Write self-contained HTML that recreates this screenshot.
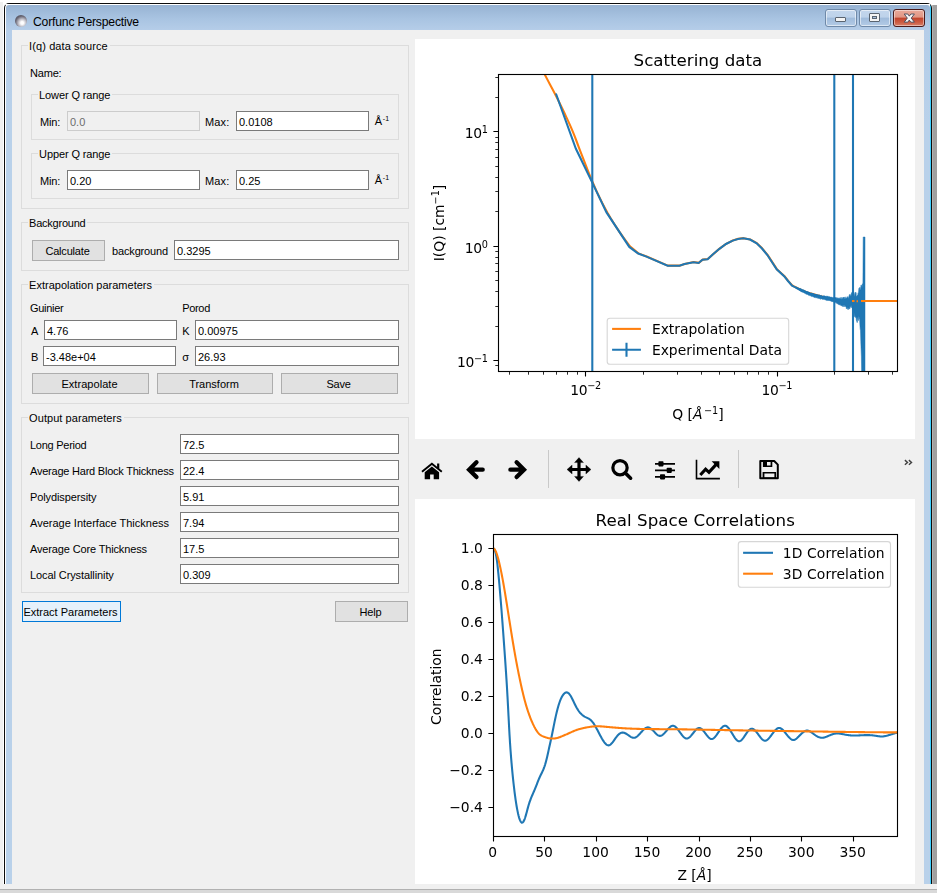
<!DOCTYPE html>
<html lang="en"><head><meta charset="utf-8"><title>Corfunc Perspective</title>
<style>

html,body{margin:0;padding:0}
body{width:937px;height:893px;position:relative;overflow:hidden;background:#fff;font:11px "Liberation Sans",sans-serif;color:#000}
div,span{position:absolute;box-sizing:border-box;white-space:nowrap}
svg{position:absolute;overflow:visible}
.t{line-height:14px;height:14px}
.gb{border:1px solid #dcdcdc}
.gl{background:#f0f0f0;padding:0 2px 0 1px;line-height:14px;height:14px}
.in{background:#fff;border:1px solid #7a7a7a;line-height:18px;padding:1px 0 0 2px;overflow:hidden}
.in.dis{background:#f0f0f0;border-color:#cccccc;color:#6d6d6d}
.btn{background:#e1e1e1;border:1px solid #adadad;text-align:center;line-height:19px;padding:1px 2px 0 0}
.pl text{font-family:"DejaVu Sans",sans-serif;fill:#000}

</style></head>
<body>

<!-- desktop around window -->
<div style="left:0;top:2px;width:3px;height:891px;background:#f0f0f0"></div>
<div style="left:932px;top:5px;width:5px;height:879px;background:#a0a0a0"></div>
<div style="left:932px;top:5px;width:1px;height:879px;background:#b4b4b4"></div>
<!-- window frame -->
<div style="left:4px;top:3px;width:928px;height:881px;background:#0c0c0c;border-radius:5px 5px 0 0"></div>
<div style="left:5px;top:4px;width:926px;height:880px;background:linear-gradient(90deg,#fff 0,#fff 925px,#3fd0ff 925px);border-radius:4px 4px 0 0"></div>
<div style="left:6px;top:5px;width:924px;height:879px;border-radius:3px 3px 0 0;background:linear-gradient(180deg,#97b3d3 0,#a9c4e2 14px,#b5cde8 25px,#b9d1ea 120px,#b9d1ea 100%)"></div>
<div style="left:5px;top:4px;width:925px;height:1px;background:#fff;border-radius:5px 0 0 0"></div>
<!-- client area -->
<div style="left:12px;top:30px;width:912px;height:854px;background:#f0f0f0"></div>
<!-- title -->
<div style="left:15px;top:14.8px;width:12px;height:12px;border-radius:50%;background:radial-gradient(circle at 60% 66%,#fff 0,#fbfbfc 14%,#b9b8c2 38%,#6b6976 62%,#4c4a57 82%,#55535f 100%)"></div>
<div style="left:33px;top:14px;font-size:12.2px;line-height:16px;letter-spacing:-0.2px;color:#000">Corfunc Perspective</div>
<!-- caption buttons -->
<div style="left:825px;top:9px;width:32px;height:18px;border:1px solid #6f89a8;border-radius:3px;background:linear-gradient(180deg,#c3d6ec 0,#bdd2ea 45%,#9fbbdb 50%,#b3cbe6 100%);box-shadow:inset 0 0 0 1px rgba(255,255,255,.55)"></div>
<div style="left:835px;top:17px;width:11px;height:5px;border:1px solid #5a6470;border-radius:1px;background:#f4f4f4"></div>
<div style="left:859px;top:9px;width:32px;height:18px;border:1px solid #6f89a8;border-radius:3px;background:linear-gradient(180deg,#c3d6ec 0,#bdd2ea 45%,#9fbbdb 50%,#b3cbe6 100%);box-shadow:inset 0 0 0 1px rgba(255,255,255,.55)"></div>
<div style="left:869px;top:13px;width:11px;height:9px;border:1px solid #5a6470;border-radius:1px;background:#f4f4f4"></div>
<div style="left:872px;top:16px;width:5px;height:3px;border:1px solid #5a6470;background:#a9c0dc"></div>
<div style="left:893px;top:9px;width:32px;height:18px;border:1px solid #4a1a1a;border-radius:3px;background:linear-gradient(180deg,#e9a99a 0,#e19684 45%,#c1432c 50%,#cb5a41 75%,#d88068 100%);box-shadow:inset 0 0 0 1px rgba(255,255,255,.45)"></div>
<svg style="left:902.6px;top:12.6px" width="12.6" height="10.2" viewBox="0 0 14 12"><path d="M1 1.2h4.2L7 3.7l1.8-2.5H13L9.3 6l3.7 4.8H8.8L7 8.3 5.2 10.8H1L4.7 6z" fill="#f8f8f8" stroke="#474b5c" stroke-width="1.1" stroke-linejoin="round"/></svg>
<!-- bottom strip -->
<div style="left:0;top:884px;width:937px;height:5px;background:#f0f0f0"></div>
<div style="left:0;top:889px;width:937px;height:1px;background:#b1b1b1"></div>
<div style="left:0;top:890px;width:937px;height:3px;background:#d9d9d9"></div>

<div class="gb" style="left:21px;top:45px;width:388px;height:164px"></div><span class="gl" style="left:28.1px;top:39px;letter-spacing:0.1px;">I(q) data source</span>
<span class="t" style="left:30px;top:66px;letter-spacing:-0.18px;">Name:</span>
<div class="gb" style="left:31px;top:94px;width:368px;height:46px"></div><span class="gl" style="left:38.1px;top:88px;letter-spacing:-0.115px;">Lower Q range</span>
<span class="t" style="left:40px;top:115px;letter-spacing:-0.12px;">Min:</span>
<div class="in dis" style="left:67px;top:111px;width:133px;height:20px">0.0</div>
<span class="t" style="left:205px;top:115px;letter-spacing:0.17px;">Max:</span>
<div class="in " style="left:236px;top:111px;width:133px;height:20px">0.0108</div>
<span class="t" style="left:374.8px;top:112px;">&#197;<span style="position:static;font-size:7px;vertical-align:4px;margin-left:.6px;letter-spacing:.2px">-1</span></span>
<div class="gb" style="left:31px;top:153px;width:368px;height:46px"></div><span class="gl" style="left:38.1px;top:147px;letter-spacing:-0.115px;">Upper Q range</span>
<span class="t" style="left:40px;top:174px;letter-spacing:-0.12px;">Min:</span>
<div class="in " style="left:67px;top:170px;width:133px;height:20px">0.20</div>
<span class="t" style="left:205px;top:174px;letter-spacing:0.17px;">Max:</span>
<div class="in " style="left:236px;top:170px;width:133px;height:20px">0.25</div>
<span class="t" style="left:374.8px;top:171px;">&#197;<span style="position:static;font-size:7px;vertical-align:4px;margin-left:.6px;letter-spacing:.2px">-1</span></span>
<div class="gb" style="left:21px;top:222px;width:388px;height:49px"></div><span class="gl" style="left:28.1px;top:216px;letter-spacing:-0.24px;">Background</span>
<div class="btn" style="left:32px;top:240px;width:73px;height:21px;letter-spacing:-0.18px;">Calculate</div>
<span class="t" style="left:112px;top:244px;letter-spacing:-0.15px;">background</span>
<div class="in " style="left:174px;top:240px;width:225px;height:20px">0.3295</div>
<div class="gb" style="left:21px;top:284px;width:388px;height:120px"></div><span class="gl" style="left:28.1px;top:278px;">Extrapolation parameters</span>
<span class="t" style="left:30px;top:301px;letter-spacing:-0.31px;">Guinier</span>
<span class="t" style="left:182.2px;top:301px;letter-spacing:-0.32px;">Porod</span>
<span class="t" style="left:31px;top:324px;">A</span>
<div class="in " style="left:44px;top:320px;width:133px;height:20px">4.76</div>
<span class="t" style="left:182.2px;top:324px;">K</span>
<div class="in " style="left:195px;top:320px;width:204px;height:20px">0.00975</div>
<span class="t" style="left:31px;top:350px;">B</span>
<div class="in " style="left:43px;top:346px;width:133px;height:20px">-3.48e+04</div>
<span class="t" style="left:182.2px;top:350px;">&#963;</span>
<div class="in " style="left:195px;top:346px;width:204px;height:20px">26.93</div>
<div class="btn" style="left:32px;top:373px;width:117px;height:21px;letter-spacing:0.05px;">Extrapolate</div>
<div class="btn" style="left:157px;top:373px;width:116px;height:21px;">Transform</div>
<div class="btn" style="left:281px;top:373px;width:117px;height:21px;letter-spacing:-0.27px;">Save</div>
<div class="gb" style="left:21px;top:417px;width:388px;height:176px"></div><span class="gl" style="left:28.1px;top:411px;letter-spacing:0.06px;">Output parameters</span>
<span class="t" style="left:30px;top:438px;letter-spacing:-0.26px;">Long Period</span>
<div class="in " style="left:180px;top:434px;width:219px;height:20px">72.5</div>
<span class="t" style="left:30px;top:464px;letter-spacing:-0.225px;">Average Hard Block Thickness</span>
<div class="in " style="left:180px;top:460px;width:219px;height:20px">22.4</div>
<span class="t" style="left:30px;top:490px;letter-spacing:-0.11px;">Polydispersity</span>
<div class="in " style="left:180px;top:486px;width:219px;height:20px">5.91</div>
<span class="t" style="left:30px;top:516px;">Average Interface Thickness</span>
<div class="in " style="left:180px;top:512px;width:219px;height:20px">7.94</div>
<span class="t" style="left:30px;top:542px;letter-spacing:-0.145px;">Average Core Thickness</span>
<div class="in " style="left:180px;top:538px;width:219px;height:20px">17.5</div>
<span class="t" style="left:30px;top:568px;letter-spacing:-0.095px;">Local Crystallinity</span>
<div class="in " style="left:180px;top:564px;width:219px;height:20px">0.309</div>
<div class="btn" style="left:22px;top:601px;width:99px;height:21px;background:#e5f1fb;border-color:#0078d7">Extract Parameters</div>
<div class="btn" style="left:335px;top:601px;width:73px;height:21px;letter-spacing:-0.2px;">Help</div>

<div style="left:415px;top:39px;width:500px;height:400px;background:#fff"></div>
<div style="left:415px;top:499px;width:500px;height:385px;background:#fff"></div>
<svg class="pl" style="left:416px;top:39px;will-change:transform" width="499" height="400" viewBox="416 39 499 400">
<defs><clipPath id="c1"><rect x="498.5" y="74.5" width="399" height="297"/></clipPath></defs>
<g clip-path="url(#c1)" fill="none" stroke-linejoin="round">
<path d="M537.58 60 L539.9 64.78 L542.26 69.56 L544.67 74.34 L547.16 79.12 L549.72 83.9 L552.28 88.68 L554.78 93.46 L557.2 98.24 L559.57 103.02 L561.9 107.79 L564.19 112.57 L566.45 117.35 L568.66 122.13 L570.79 126.91 L572.8 131.69 L574.72 136.47 L576.57 141.25 L578.38 146.03 L580.19 150.81 L582.04 155.59 L583.9 160.37 L585.74 165.15 L587.58 169.93 L589.47 174.71 L591.44 179.49 L593.51 184.27 L595.64 189.05 L597.83 193.83 L600.11 198.61 L602.49 203.38 L604.99 208.16 L607.62 212.94 L610.4 217.72 L613.33 222.5 L616.4 227.28 L619.61 232.06 L622.95 236.84 L626.41 241.62 L630 246.4 L638.35 253.35 L646.65 256.45 L667.75 265.65 L679.55 265.65 L684.65 263.95 L693.65 262.05 L698.75 262.85 L702.65 259.65 L707.75 259.05 L712.85 254.45 L719.55 248.65 L726.15 243.85 L732.85 240.45 L738.15 238.75 L743.55 238.15 L750.15 239.45 L756.85 243.15 L762.15 248.35 L767.55 254.85 L776.85 269.15 L784.55 276.25 L788.15 280.85 L792.25 285.45 L794.15 286.45 L802.15 290.35 L810.15 293.35 L826.15 297.75 L834.15 299.45 L843 301.2 L852 301 L900 301" stroke="#ff7f0e" stroke-width="2.08"/>
<path d="M592.3 72.5V373.5" stroke="#1f77b4" stroke-width="2.08"/>
<path d="M834.3 72.5V373.5" stroke="#1f77b4" stroke-width="2.08"/>
<path d="M853 72.5V373.5" stroke="#1f77b4" stroke-width="2.08"/>
<path d="M555.9 93.5 L575.9 148.8 L592.4 182.9 L606.5 212.4 L629.3 246.9 L638.2 253.5 L646.5 256.6 L667.6 265.8 L679.4 265.8 L684.5 264.1 L693.5 262.2 L698.6 263 L702.5 259.8 L707.6 259.2 L712.7 254.6 L719.4 248.8 L726 244 L732.7 240.6 L738 238.9 L743.4 238.3 L750 239.6 L756.7 243.3 L762 248.5 L767.4 255 L776.7 269.3 L784.4 276.4 L788 281 L792.1 285.6 L794 286.6 L802 290.5 L810 293.5 L826 297.9 L834 299.6" stroke="#1f77b4" stroke-width="2.08" stroke-linejoin="miter"/>
<path d="M796 287.26 L796.3 287.27 L796.6 287.51 L796.9 287.69 L797.2 287.65 L797.5 287.76 L797.8 287.61 L798.1 287.92 L798.4 288.25 L798.7 288.3 L799 288.32 L799.3 288.01 L799.6 288.6 L799.9 288.67 L800.2 288.31 L800.5 288.77 L800.8 288.47 L801.1 288.68 L801.4 288.96 L801.7 288.98 L802 289.55 L802.3 289.73 L802.6 289.52 L802.9 289.64 L803.2 289.62 L803.5 289.74 L803.8 290.34 L804.1 290.39 L804.4 290.12 L804.7 290.57 L805 290.65 L805.3 291.12 L805.6 291.16 L805.9 291.21 L806.2 291.31 L806.5 291.75 L806.8 291.91 L807.1 291.55 L807.4 291.61 L807.7 292.18 L808 291.75 L808.3 292.12 L808.6 292.02 L808.9 292.35 L809.2 292.3 L809.5 292.6 L809.8 293.13 L810.1 293.34 L810.4 293.32 L810.7 293.21 L811 293.33 L811.3 293.19 L811.6 293.11 L811.9 293.4 L812.2 293.71 L812.5 293.23 L812.8 293.26 L813.1 293.96 L813.4 293.64 L813.7 294.05 L814 294.15 L814.3 294.39 L814.6 294 L814.9 294.04 L815.2 294.5 L815.5 294.54 L815.8 294.51 L816.1 294.72 L816.4 294.64 L816.7 295 L817 294.51 L817.3 294.95 L817.6 295.21 L817.9 294.72 L818.2 295.05 L818.5 294.89 L818.8 295.05 L819.1 294.76 L819.4 294.78 L819.7 295.55 L820 295.33 L820.3 295.53 L820.6 295.69 L820.9 295.42 L821.2 295.41 L821.5 295.26 L821.8 295.92 L822.1 296 L822.4 295.95 L822.7 296.13 L823 295.95 L823.3 296.04 L823.6 295.57 L823.9 296.2 L824.2 295.79 L824.5 295.94 L824.8 295.86 L825.1 296.16 L825.4 296.3 L825.7 296.26 L826 296.02 L826.3 295.96 L826.6 296.68 L826.9 296.13 L827.2 296.32 L827.5 295.98 L827.8 296.25 L828.1 296.05 L828.4 296.38 L828.7 296.84 L829 297.18 L829.3 296.83 L829.6 296.46 L829.9 296.95 L830.2 296.97 L830.5 297.26 L830.8 296.98 L831.1 297.49 L831.4 296.97 L831.7 296.88 L832 297.21 L832.3 297.75 L832.6 297.57 L832.9 297.36 L833.2 297.43 L833.5 297.67 L833.8 297.49 L834.1 297.67 L834.4 298.22 L834.7 298.22 L835 298.15 L835.3 297.26 L835.6 297.86 L835.9 297.64 L836.2 298.44 L836.5 297.62 L836.8 298.57 L837.1 297.57 L837.4 297.88 L837.7 298.76 L838 298.23 L838.3 298.82 L838.6 298.21 L838.9 297.72 L839.2 298.59 L839.5 298.29 L839.8 298.3 L840.1 297.64 L840.4 297.62 L840.7 299.08 L841 299.12 L841.3 299.14 L841.6 297.9 L841.9 297.23 L842.2 298.25 L842.5 298.62 L842.8 298.41 L843.1 297.08 L843.4 297.45 L843.7 298.49 L844 296.97 L844.3 298.79 L844.6 299.12 L844.9 297.32 L845.2 296.8 L845.5 299.12 L845.8 298.58 L846.1 297.74 L846.4 297.79 L846.7 299.02 L847 297.4 L847.3 296.48 L847.6 298.14 L847.9 297.19 L848.2 298.11 L848.5 298.61 L848.8 296.39 L849.1 295.67 L849.4 294.69 L849.7 296.87 L850 294.06 L850.3 296.58 L850.6 295.42 L850.9 295.76 L851.2 295.21 L851.5 292.83 L851.8 292.52 L852.1 295.24 L852.4 292.47 L852.7 294.25 L853 291.51 L853.3 292.27 L853.6 294.3 L853.9 292.48 L854.2 295.43 L854.5 296.55 L854.8 293.53 L855.1 293.54 L855.4 292.05 L855.7 294.55 L856 292.54 L856.3 295.73 L856.6 296.55 L856.9 295.96 L857.2 295.68 L857.5 294.85 L857.8 295.86 L858.1 292.82 L858.4 293.99 L858.7 290.12 L859 288.04 L859.3 288.03 L859.6 290.95 L859.9 287.06 L860.2 289.81 L860.5 290.09 L860.8 287.6 L861.1 284.94 L861.4 287.41 L861.7 285.44 L862 288.28 L862.3 283.93 L862.6 283.74 L862.9 284.98 L863.2 237 L863.5 237 L863.8 237 L864.1 237 L864.4 237 L864.7 237 L865 237 L865 380 L864.7 380 L864.4 380 L864.1 380 L863.8 380 L863.5 380 L863.2 380 L862.9 380 L862.6 380 L862.3 380 L862 380 L861.7 375.33 L861.4 356.89 L861.1 349.36 L860.8 341.62 L860.5 330.78 L860.2 328.93 L859.9 325.02 L859.6 318.89 L859.3 319.07 L859 316.41 L858.7 316.99 L858.4 320.7 L858.1 316.46 L857.8 318.17 L857.5 320.27 L857.2 322.75 L856.9 321 L856.6 321.24 L856.3 319.67 L856 316.42 L855.7 317.59 L855.4 315.44 L855.1 317.26 L854.8 316.53 L854.5 316.59 L854.2 315.49 L853.9 311.34 L853.6 309.99 L853.3 309.43 L853 308.73 L852.7 306.93 L852.4 308.22 L852.1 306.36 L851.8 305.05 L851.5 307.69 L851.2 306.44 L850.9 305.42 L850.6 306.64 L850.3 305.71 L850 308.4 L849.7 306.12 L849.4 309.1 L849.1 306.67 L848.8 308.52 L848.5 307.92 L848.2 309.82 L847.9 309.46 L847.6 308.82 L847.3 308.47 L847 307 L846.7 308.35 L846.4 308.96 L846.1 306.91 L845.8 306.22 L845.5 306.65 L845.2 305.63 L844.9 306.24 L844.6 306.8 L844.3 305.16 L844 305.12 L843.7 305.66 L843.4 306.82 L843.1 304.87 L842.8 305.69 L842.5 306.5 L842.2 304.75 L841.9 306.17 L841.6 305.21 L841.3 305.44 L841 305.24 L840.7 304.55 L840.4 305.59 L840.1 304.73 L839.8 305.05 L839.5 305.02 L839.2 304.44 L838.9 304.6 L838.6 304.56 L838.3 304.59 L838 303.56 L837.7 303.18 L837.4 304.1 L837.1 303.2 L836.8 303.5 L836.5 302.88 L836.2 302.39 L835.9 303.2 L835.6 301.98 L835.3 302.19 L835 301.71 L834.7 301.6 L834.4 302.27 L834.1 302.07 L833.8 301.21 L833.5 302.16 L833.2 301.11 L832.9 302.01 L832.6 301.54 L832.3 301.4 L832 301.24 L831.7 301.79 L831.4 301.55 L831.1 300.9 L830.8 301.13 L830.5 300.73 L830.2 300.96 L829.9 300.65 L829.6 300.28 L829.3 300.72 L829 300.79 L828.7 300.11 L828.4 300.75 L828.1 300.06 L827.8 300.29 L827.5 300.82 L827.2 300.37 L826.9 300.49 L826.6 300.53 L826.3 300.3 L826 299.7 L825.7 299.84 L825.4 300.02 L825.1 300.06 L824.8 299.45 L824.5 299.59 L824.2 299.49 L823.9 299.29 L823.6 299.12 L823.3 299.48 L823 299.87 L822.7 299.21 L822.4 299.04 L822.1 299.24 L821.8 298.98 L821.5 298.8 L821.2 299.04 L820.9 298.67 L820.6 299.34 L820.3 299.23 L820 298.3 L819.7 298.26 L819.4 298.76 L819.1 298.86 L818.8 298.19 L818.5 298.38 L818.2 298.24 L817.9 297.85 L817.6 297.87 L817.3 298.33 L817 298.22 L816.7 297.73 L816.4 298.01 L816.1 297.44 L815.8 297.73 L815.5 297.6 L815.2 297.19 L814.9 297.65 L814.6 297.5 L814.3 297.38 L814 296.83 L813.7 296.76 L813.4 297.14 L813.1 297.1 L812.8 296.31 L812.5 296.48 L812.2 296.55 L811.9 296.71 L811.6 296.51 L811.3 296.34 L811 295.84 L810.7 295.8 L810.4 295.79 L810.1 296.06 L809.8 295.96 L809.5 295.17 L809.2 295.11 L808.9 295.41 L808.6 295.22 L808.3 294.97 L808 294.79 L807.7 294.49 L807.4 294.85 L807.1 294.26 L806.8 294.23 L806.5 294.23 L806.2 294.25 L805.9 293.54 L805.6 293.68 L805.3 293.69 L805 293.62 L804.7 292.98 L804.4 293.23 L804.1 292.94 L803.8 292.59 L803.5 292.65 L803.2 292.33 L802.9 292.71 L802.6 292.18 L802.3 291.83 L802 292.05 L801.7 291.88 L801.4 291.74 L801.1 291.64 L800.8 291.23 L800.5 291.31 L800.2 291.22 L799.9 290.93 L799.6 290.64 L799.3 290.45 L799 290.44 L798.7 289.88 L798.4 289.98 L798.1 289.63 L797.8 289.36 L797.5 289.21 L797.2 289 L796.9 289.1 L796.6 289 L796.3 288.65 L796 288.47Z" fill="#1f77b4" stroke="#1f77b4" stroke-width="0.5" stroke-linejoin="round"/>
<path d="M852 301H854.5M856.5 301.3H858M861 301H900" stroke="#ff7f0e" stroke-width="2.08"/>
</g>
<rect x="498.5" y="74.5" width="399" height="297" fill="none" stroke="#000" stroke-width="1.11"/>
<path d="M585.5 371.5v5.1M777.5 371.5v5.1M498.5 360.5h-5.1M498.5 246.5h-5.1M498.5 131.5h-5.1" stroke="#000" stroke-width="1.11"/>
<path d="M509.5 371.5v3.2M528.5 371.5v3.2M543.5 371.5v3.2M556.5 371.5v3.2M567.5 371.5v3.2M577.5 371.5v3.2M643.5 371.5v3.2M677.5 371.5v3.2M701.5 371.5v3.2M719.5 371.5v3.2M734.5 371.5v3.2M747.5 371.5v3.2M758.5 371.5v3.2M768.5 371.5v3.2M834.5 371.5v3.2M868.5 371.5v3.2M892.5 371.5v3.2M498.5 365.5h-3.2M498.5 326.5h-3.2M498.5 306.5h-3.2M498.5 291.5h-3.2M498.5 280.5h-3.2M498.5 271.5h-3.2M498.5 263.5h-3.2M498.5 257.5h-3.2M498.5 251.5h-3.2M498.5 211.5h-3.2M498.5 191.5h-3.2M498.5 177.5h-3.2M498.5 166.5h-3.2M498.5 157.5h-3.2M498.5 149.5h-3.2M498.5 142.5h-3.2M498.5 137.5h-3.2M498.5 97.5h-3.2M498.5 77.5h-3.2" stroke="#000" stroke-width="0.83"/>
<text x="585.59" y="394.6" font-size="13.89" text-anchor="middle" letter-spacing="-0.35">10<tspan dy="-5.3" font-size="9.72">&#8722;2</tspan></text>
<text x="776.78" y="394.6" font-size="13.89" text-anchor="middle" letter-spacing="-0.35">10<tspan dy="-5.3" font-size="9.72">&#8722;1</tspan></text>
<text x="487.6" y="366.9" font-size="13.89" text-anchor="end" letter-spacing="-0.35">10<tspan dy="-5.3" font-size="9.72">&#8722;1</tspan></text>
<text x="487.6" y="252.9" font-size="13.89" text-anchor="end" letter-spacing="-0.35">10<tspan dy="-5.3" font-size="9.72">0</tspan></text>
<text x="487.6" y="137.9" font-size="13.89" text-anchor="end" letter-spacing="-0.35">10<tspan dy="-5.3" font-size="9.72">1</tspan></text>
<text x="697.9" y="65.9" font-size="16.67" text-anchor="middle">Scattering data</text>
<text x="697.9" y="418.8" font-size="13.89" text-anchor="middle">Q [<tspan font-style="italic">&#197;</tspan><tspan dy="-5.3" dx="1.5" font-size="9.72">&#8722;1</tspan><tspan dy="5.3">]</tspan></text>
<text transform="translate(444.3 223) rotate(-90)" font-size="13.89" text-anchor="middle">I(Q) [cm<tspan dy="-5.3" font-size="9.72">&#8722;1</tspan><tspan dy="5.3">]</tspan></text>
<rect x="607.2" y="318.3" width="181.5" height="46" rx="2.8" fill="#fff" fill-opacity="0.8" stroke="#ccc" stroke-opacity="0.8" stroke-width="1.11"/>
<path d="M612.1 328.9h28.8" stroke="#ff7f0e" stroke-width="2.08"/>
<path d="M612.1 349.7h28.8M626.5 342.8v13.9" stroke="#1f77b4" stroke-width="2.08"/>
<text x="651.9" y="333.8" font-size="13.89">Extrapolation</text>
<text x="651.9" y="354.6" font-size="13.89">Experimental Data</text>
</svg>
<svg class="pl" style="left:416px;top:499px;will-change:transform" width="499" height="385" viewBox="416 499 499 385">
<defs><clipPath id="c2"><rect x="493.5" y="534.5" width="404" height="302"/></clipPath></defs>
<g clip-path="url(#c2)" fill="none" stroke-linejoin="round">
<path d="M493.3 548.5 L493.81 548.67 L494.31 549.23 L494.82 550.24 L495.33 551.76 L495.84 553.85 L496.34 556.57 L496.85 559.96 L497.36 563.97 L497.86 568.52 L498.37 573.52 L498.88 578.88 L499.39 584.53 L499.89 590.39 L500.4 596.42 L500.91 602.63 L501.42 609 L501.92 615.51 L502.43 622.17 L502.94 628.97 L503.44 635.88 L503.95 642.9 L504.46 650 L504.97 657.18 L505.47 664.43 L505.98 671.84 L506.49 679.57 L506.99 687.78 L507.5 696.64 L508.01 706.18 L508.52 716.05 L509.02 725.79 L509.53 734.92 L510.04 743.13 L510.55 750.5 L511.05 757.15 L511.56 763.21 L512.07 768.82 L512.57 774.08 L513.08 779.06 L513.59 783.75 L514.1 788.16 L514.6 792.3 L515.11 796.17 L515.62 799.78 L516.12 803.13 L516.63 806.22 L517.14 809.06 L517.65 811.65 L518.15 813.99 L518.66 816.06 L519.17 817.86 L519.68 819.38 L520.18 820.62 L520.69 821.57 L521.2 822.24 L521.7 822.6 L522.21 822.66 L522.72 822.42 L523.23 821.89 L523.73 821.1 L524.24 820.05 L524.75 818.76 L525.25 817.26 L525.76 815.59 L526.27 813.79 L526.78 811.91 L527.28 810 L527.79 808.11 L528.3 806.28 L528.81 804.55 L529.31 802.95 L529.82 801.44 L530.33 800.03 L530.83 798.7 L531.34 797.42 L531.85 796.2 L532.36 795.02 L532.86 793.85 L533.37 792.7 L533.88 791.54 L534.38 790.37 L534.89 789.16 L535.4 787.91 L535.91 786.63 L536.41 785.32 L536.92 784.01 L537.43 782.69 L537.94 781.39 L538.44 780.13 L538.95 778.9 L539.46 777.73 L539.96 776.62 L540.47 775.55 L540.98 774.51 L541.49 773.47 L541.99 772.43 L542.5 771.35 L543.01 770.23 L543.51 769.04 L544.02 767.75 L544.53 766.35 L545.04 764.82 L545.54 763.13 L546.05 761.28 L546.56 759.27 L547.07 757.15 L547.57 754.94 L548.08 752.68 L548.59 750.38 L549.09 748.09 L549.6 745.8 L550.11 743.5 L550.62 741.17 L551.12 738.82 L551.63 736.43 L552.14 733.99 L552.64 731.5 L553.15 728.97 L553.66 726.42 L554.17 723.89 L554.67 721.39 L555.18 718.95 L555.69 716.6 L556.2 714.36 L556.7 712.22 L557.21 710.2 L557.72 708.29 L558.22 706.49 L558.73 704.8 L559.24 703.23 L559.75 701.77 L560.25 700.42 L560.76 699.19 L561.27 698.07 L561.77 697.05 L562.28 696.13 L562.79 695.32 L563.3 694.61 L563.8 693.99 L564.31 693.47 L564.82 693.04 L565.33 692.72 L565.83 692.51 L566.34 692.41 L566.85 692.41 L567.35 692.54 L567.86 692.78 L568.37 693.12 L568.88 693.57 L569.38 694.12 L569.89 694.77 L570.4 695.5 L570.9 696.32 L571.41 697.22 L571.92 698.18 L572.43 699.18 L572.93 700.23 L573.44 701.29 L573.95 702.37 L574.46 703.44 L574.96 704.49 L575.47 705.52 L575.98 706.5 L576.48 707.44 L576.99 708.33 L577.5 709.18 L578.01 709.98 L578.51 710.74 L579.02 711.45 L579.53 712.12 L580.03 712.74 L580.54 713.32 L581.05 713.85 L581.56 714.34 L582.06 714.79 L582.57 715.2 L583.08 715.58 L583.59 715.93 L584.09 716.25 L584.6 716.55 L585.11 716.83 L585.61 717.09 L586.12 717.34 L586.63 717.58 L587.14 717.82 L587.64 718.07 L588.15 718.32 L588.66 718.6 L589.16 718.91 L589.67 719.25 L590.18 719.63 L590.69 720.06 L591.19 720.54 L591.7 721.07 L592.21 721.65 L592.72 722.28 L593.22 722.96 L593.73 723.69 L594.24 724.46 L594.74 725.28 L595.25 726.13 L595.76 727.03 L596.27 727.95 L596.77 728.89 L597.28 729.85 L597.79 730.82 L598.29 731.8 L598.8 732.78 L599.31 733.75 L599.82 734.72 L600.32 735.68 L600.83 736.62 L601.34 737.53 L601.84 738.43 L602.35 739.29 L602.86 740.12 L603.37 740.91 L603.87 741.66 L604.38 742.36 L604.89 743 L605.4 743.58 L605.9 744.09 L606.41 744.52 L606.92 744.87 L607.42 745.13 L607.93 745.29 L608.44 745.35 L608.95 745.3 L609.45 745.14 L609.96 744.88 L610.47 744.53 L610.97 744.1 L611.48 743.6 L611.99 743.04 L612.5 742.43 L613 741.77 L613.51 741.09 L614.02 740.38 L614.53 739.66 L615.03 738.93 L615.54 738.21 L616.05 737.5 L616.55 736.82 L617.06 736.17 L617.57 735.57 L618.08 735.01 L618.58 734.51 L619.09 734.07 L619.6 733.68 L620.1 733.35 L620.61 733.07 L621.12 732.86 L621.63 732.7 L622.13 732.61 L622.64 732.58 L623.15 732.6 L623.66 732.68 L624.16 732.82 L624.67 733 L625.18 733.22 L625.68 733.47 L626.19 733.76 L626.7 734.07 L627.21 734.4 L627.71 734.75 L628.22 735.1 L628.73 735.46 L629.23 735.81 L629.74 736.16 L630.25 736.49 L630.76 736.8 L631.26 737.07 L631.77 737.32 L632.28 737.52 L632.79 737.67 L633.29 737.77 L633.8 737.8 L634.31 737.77 L634.81 737.67 L635.32 737.49 L635.83 737.25 L636.34 736.95 L636.84 736.6 L637.35 736.2 L637.86 735.76 L638.36 735.28 L638.87 734.77 L639.38 734.24 L639.89 733.69 L640.39 733.13 L640.9 732.56 L641.41 731.99 L641.92 731.43 L642.42 730.88 L642.93 730.34 L643.44 729.84 L643.94 729.36 L644.45 728.92 L644.96 728.52 L645.47 728.18 L645.97 727.88 L646.48 727.65 L646.99 727.49 L647.49 727.4 L648 727.39 L648.51 727.46 L649.02 727.6 L649.52 727.8 L650.03 728.07 L650.54 728.38 L651.05 728.75 L651.55 729.16 L652.06 729.6 L652.57 730.07 L653.07 730.57 L653.58 731.09 L654.09 731.62 L654.6 732.16 L655.1 732.69 L655.61 733.22 L656.12 733.72 L656.62 734.19 L657.13 734.62 L657.64 735.01 L658.15 735.33 L658.65 735.6 L659.16 735.78 L659.67 735.89 L660.18 735.9 L660.68 735.83 L661.19 735.67 L661.7 735.44 L662.2 735.13 L662.71 734.77 L663.22 734.35 L663.73 733.89 L664.23 733.38 L664.74 732.84 L665.25 732.28 L665.75 731.69 L666.26 731.09 L666.77 730.49 L667.28 729.9 L667.78 729.31 L668.29 728.74 L668.8 728.2 L669.31 727.69 L669.81 727.22 L670.32 726.8 L670.83 726.44 L671.33 726.14 L671.84 725.92 L672.35 725.77 L672.86 725.72 L673.36 725.75 L673.87 725.89 L674.38 726.11 L674.88 726.42 L675.39 726.8 L675.9 727.25 L676.41 727.75 L676.91 728.31 L677.42 728.92 L677.93 729.55 L678.44 730.22 L678.94 730.91 L679.45 731.61 L679.96 732.32 L680.46 733.02 L680.97 733.72 L681.48 734.4 L681.99 735.05 L682.49 735.67 L683 736.24 L683.51 736.77 L684.01 737.25 L684.52 737.65 L685.03 737.99 L685.54 738.25 L686.04 738.42 L686.55 738.5 L687.06 738.48 L687.57 738.37 L688.07 738.17 L688.58 737.89 L689.09 737.54 L689.59 737.13 L690.1 736.67 L690.61 736.16 L691.12 735.6 L691.62 735.01 L692.13 734.4 L692.64 733.77 L693.14 733.12 L693.65 732.48 L694.16 731.84 L694.67 731.21 L695.17 730.62 L695.68 730.06 L696.19 729.54 L696.7 729.08 L697.2 728.69 L697.71 728.37 L698.22 728.13 L698.72 727.99 L699.23 727.95 L699.74 728.01 L700.25 728.17 L700.75 728.42 L701.26 728.75 L701.77 729.16 L702.27 729.62 L702.78 730.15 L703.29 730.71 L703.8 731.32 L704.3 731.96 L704.81 732.62 L705.32 733.3 L705.82 733.98 L706.33 734.66 L706.84 735.32 L707.35 735.96 L707.85 736.56 L708.36 737.12 L708.87 737.63 L709.38 738.08 L709.88 738.45 L710.39 738.74 L710.9 738.94 L711.4 739.04 L711.91 739.03 L712.42 738.91 L712.93 738.69 L713.43 738.38 L713.94 737.98 L714.45 737.51 L714.95 736.98 L715.46 736.38 L715.97 735.74 L716.48 735.06 L716.98 734.35 L717.49 733.61 L718 732.86 L718.51 732.11 L719.01 731.35 L719.52 730.61 L720.03 729.89 L720.53 729.19 L721.04 728.54 L721.55 727.93 L722.06 727.38 L722.56 726.89 L723.07 726.48 L723.58 726.15 L724.08 725.9 L724.59 725.76 L725.1 725.73 L725.61 725.81 L726.11 726 L726.62 726.28 L727.13 726.65 L727.64 727.1 L728.14 727.63 L728.65 728.22 L729.16 728.87 L729.66 729.58 L730.17 730.32 L730.68 731.1 L731.19 731.91 L731.69 732.73 L732.2 733.57 L732.71 734.41 L733.21 735.24 L733.72 736.06 L734.23 736.85 L734.74 737.61 L735.24 738.32 L735.75 738.98 L736.26 739.57 L736.77 740.09 L737.27 740.53 L737.78 740.87 L738.29 741.12 L738.79 741.25 L739.3 741.26 L739.81 741.15 L740.32 740.92 L740.82 740.6 L741.33 740.18 L741.84 739.68 L742.34 739.11 L742.85 738.48 L743.36 737.81 L743.87 737.1 L744.37 736.36 L744.88 735.61 L745.39 734.86 L745.9 734.11 L746.4 733.38 L746.91 732.67 L747.42 731.99 L747.92 731.35 L748.43 730.76 L748.94 730.23 L749.45 729.76 L749.95 729.37 L750.46 729.05 L750.97 728.83 L751.47 728.7 L751.98 728.68 L752.49 728.77 L753 728.94 L753.5 729.2 L754.01 729.55 L754.52 729.96 L755.03 730.43 L755.53 730.96 L756.04 731.54 L756.55 732.15 L757.05 732.8 L757.56 733.46 L758.07 734.15 L758.58 734.84 L759.08 735.53 L759.59 736.21 L760.1 736.87 L760.6 737.51 L761.11 738.12 L761.62 738.68 L762.13 739.19 L762.63 739.64 L763.14 740.02 L763.65 740.33 L764.16 740.55 L764.66 740.69 L765.17 740.71 L765.68 740.64 L766.18 740.47 L766.69 740.22 L767.2 739.89 L767.71 739.48 L768.21 739.01 L768.72 738.49 L769.23 737.92 L769.73 737.31 L770.24 736.67 L770.75 736 L771.26 735.32 L771.76 734.63 L772.27 733.94 L772.78 733.26 L773.29 732.59 L773.79 731.94 L774.3 731.31 L774.81 730.72 L775.31 730.17 L775.82 729.67 L776.33 729.21 L776.84 728.82 L777.34 728.49 L777.85 728.23 L778.36 728.06 L778.86 727.96 L779.37 727.96 L779.88 728.04 L780.39 728.21 L780.89 728.46 L781.4 728.77 L781.91 729.15 L782.42 729.58 L782.92 730.06 L783.43 730.59 L783.94 731.15 L784.44 731.74 L784.95 732.35 L785.46 732.98 L785.97 733.62 L786.47 734.27 L786.98 734.91 L787.49 735.54 L787.99 736.15 L788.5 736.74 L789.01 737.31 L789.52 737.83 L790.02 738.31 L790.53 738.75 L791.04 739.13 L791.55 739.45 L792.05 739.7 L792.56 739.87 L793.07 739.96 L793.57 739.97 L794.08 739.89 L794.59 739.73 L795.1 739.51 L795.6 739.22 L796.11 738.87 L796.62 738.48 L797.12 738.04 L797.63 737.57 L798.14 737.08 L798.65 736.57 L799.15 736.04 L799.66 735.52 L800.17 734.99 L800.68 734.48 L801.18 733.98 L801.69 733.5 L802.2 733.03 L802.7 732.6 L803.21 732.19 L803.72 731.82 L804.23 731.49 L804.73 731.2 L805.24 730.96 L805.75 730.77 L806.25 730.63 L806.76 730.55 L807.27 730.54 L807.78 730.59 L808.28 730.7 L808.79 730.87 L809.3 731.07 L809.8 731.32 L810.31 731.61 L810.82 731.93 L811.33 732.27 L811.83 732.63 L812.34 733 L812.85 733.39 L813.36 733.77 L813.86 734.16 L814.37 734.53 L814.88 734.9 L815.38 735.24 L815.89 735.58 L816.4 735.89 L816.91 736.19 L817.41 736.46 L817.92 736.72 L818.43 736.95 L818.93 737.15 L819.44 737.33 L819.95 737.48 L820.46 737.6 L820.96 737.68 L821.47 737.74 L821.98 737.76 L822.49 737.74 L822.99 737.69 L823.5 737.61 L824.01 737.51 L824.51 737.38 L825.02 737.23 L825.53 737.06 L826.04 736.88 L826.54 736.68 L827.05 736.47 L827.56 736.26 L828.06 736.04 L828.57 735.81 L829.08 735.59 L829.59 735.38 L830.09 735.17 L830.6 734.96 L831.11 734.77 L831.62 734.59 L832.12 734.41 L832.63 734.25 L833.14 734.1 L833.64 733.96 L834.15 733.84 L834.66 733.74 L835.17 733.65 L835.67 733.57 L836.18 733.52 L836.69 733.49 L837.19 733.47 L837.7 733.47 L838.21 733.49 L838.72 733.52 L839.22 733.57 L839.73 733.63 L840.24 733.7 L840.75 733.77 L841.25 733.86 L841.76 733.95 L842.27 734.05 L842.77 734.15 L843.28 734.25 L843.79 734.35 L844.3 734.46 L844.8 734.56 L845.31 734.65 L845.82 734.75 L846.32 734.83 L846.83 734.92 L847.34 735 L847.85 735.07 L848.35 735.14 L848.86 735.2 L849.37 735.26 L849.88 735.32 L850.38 735.36 L850.89 735.41 L851.4 735.44 L851.9 735.48 L852.41 735.5 L852.92 735.52 L853.43 735.54 L853.93 735.55 L854.44 735.55 L854.95 735.55 L855.45 735.54 L855.96 735.53 L856.47 735.52 L856.98 735.5 L857.48 735.48 L857.99 735.46 L858.5 735.43 L859.01 735.41 L859.51 735.38 L860.02 735.35 L860.53 735.32 L861.03 735.29 L861.54 735.27 L862.05 735.24 L862.56 735.21 L863.06 735.19 L863.57 735.17 L864.08 735.15 L864.58 735.13 L865.09 735.12 L865.6 735.11 L866.11 735.1 L866.61 735.1 L867.12 735.1 L867.63 735.1 L868.14 735.11 L868.64 735.12 L869.15 735.14 L869.66 735.16 L870.16 735.18 L870.67 735.21 L871.18 735.25 L871.69 735.29 L872.19 735.34 L872.7 735.39 L873.21 735.45 L873.71 735.51 L874.22 735.58 L874.73 735.66 L875.24 735.74 L875.74 735.82 L876.25 735.9 L876.76 735.99 L877.27 736.07 L877.77 736.14 L878.28 736.22 L878.79 736.28 L879.29 736.34 L879.8 736.39 L880.31 736.43 L880.82 736.46 L881.32 736.47 L881.83 736.47 L882.34 736.45 L882.84 736.42 L883.35 736.37 L883.86 736.3 L884.37 736.22 L884.87 736.13 L885.38 736.03 L885.89 735.92 L886.4 735.8 L886.9 735.67 L887.41 735.54 L887.92 735.39 L888.42 735.25 L888.93 735.1 L889.44 734.94 L889.95 734.78 L890.45 734.63 L890.96 734.47 L891.47 734.31 L891.97 734.15 L892.48 734 L892.99 733.84 L893.5 733.69 L894 733.54 L894.51 733.4 L895.02 733.26 L895.53 733.12 L896.03 732.99 L896.54 732.87 L897.05 732.76 L897.55 732.65 L898.06 732.55 L898.57 732.45" stroke="#1f77b4" stroke-width="2.08"/>
<path d="M493.3 548.5 L493.81 548.63 L494.31 549.01 L494.82 549.62 L495.33 550.46 L495.84 551.5 L496.34 552.74 L496.85 554.16 L497.36 555.74 L497.86 557.46 L498.37 559.33 L498.88 561.32 L499.39 563.42 L499.89 565.63 L500.4 567.95 L500.91 570.37 L501.42 572.88 L501.92 575.48 L502.43 578.17 L502.94 580.93 L503.44 583.77 L503.95 586.68 L504.46 589.65 L504.97 592.67 L505.47 595.75 L505.98 598.86 L506.49 602.01 L506.99 605.19 L507.5 608.39 L508.01 611.61 L508.52 614.83 L509.02 618.06 L509.53 621.28 L510.04 624.49 L510.55 627.68 L511.05 630.85 L511.56 634 L512.07 637.13 L512.57 640.22 L513.08 643.27 L513.59 646.28 L514.1 649.25 L514.6 652.16 L515.11 655.03 L515.62 657.84 L516.12 660.6 L516.63 663.3 L517.14 665.97 L517.65 668.58 L518.15 671.15 L518.66 673.67 L519.17 676.15 L519.68 678.59 L520.18 680.99 L520.69 683.35 L521.2 685.66 L521.7 687.93 L522.21 690.15 L522.72 692.32 L523.23 694.44 L523.73 696.49 L524.24 698.49 L524.75 700.43 L525.25 702.3 L525.76 704.1 L526.27 705.84 L526.78 707.52 L527.28 709.14 L527.79 710.7 L528.3 712.21 L528.81 713.67 L529.31 715.08 L529.82 716.44 L530.33 717.77 L530.83 719.05 L531.34 720.3 L531.85 721.5 L532.36 722.66 L532.86 723.79 L533.37 724.86 L533.88 725.9 L534.38 726.89 L534.89 727.84 L535.4 728.75 L535.91 729.61 L536.41 730.42 L536.92 731.18 L537.43 731.89 L537.94 732.55 L538.44 733.15 L538.95 733.69 L539.46 734.17 L539.96 734.6 L540.47 734.99 L540.98 735.33 L541.49 735.63 L541.99 735.9 L542.5 736.14 L543.01 736.36 L543.51 736.57 L544.02 736.76 L544.53 736.94 L545.04 737.13 L545.54 737.3 L546.05 737.47 L546.56 737.63 L547.07 737.78 L547.57 737.92 L548.08 738.05 L548.59 738.16 L549.09 738.26 L549.6 738.35 L550.11 738.42 L550.62 738.48 L551.12 738.52 L551.63 738.55 L552.14 738.56 L552.64 738.56 L553.15 738.55 L553.66 738.52 L554.17 738.48 L554.67 738.43 L555.18 738.36 L555.69 738.28 L556.2 738.19 L556.7 738.09 L557.21 737.97 L557.72 737.84 L558.22 737.69 L558.73 737.53 L559.24 737.36 L559.75 737.18 L560.25 736.98 L560.76 736.78 L561.27 736.57 L561.77 736.36 L562.28 736.14 L562.79 735.92 L563.3 735.7 L563.8 735.48 L564.31 735.26 L564.82 735.04 L565.33 734.83 L565.83 734.61 L566.34 734.39 L566.85 734.18 L567.35 733.96 L567.86 733.73 L568.37 733.51 L568.88 733.28 L569.38 733.05 L569.89 732.82 L570.4 732.59 L570.9 732.36 L571.41 732.13 L571.92 731.9 L572.43 731.67 L572.93 731.45 L573.44 731.23 L573.95 731.01 L574.46 730.8 L574.96 730.6 L575.47 730.4 L575.98 730.21 L576.48 730.02 L576.99 729.85 L577.5 729.68 L578.01 729.51 L578.51 729.35 L579.02 729.2 L579.53 729.05 L580.03 728.91 L580.54 728.78 L581.05 728.65 L581.56 728.52 L582.06 728.4 L582.57 728.28 L583.08 728.16 L583.59 728.05 L584.09 727.94 L584.6 727.83 L585.11 727.73 L585.61 727.63 L586.12 727.53 L586.63 727.44 L587.14 727.34 L587.64 727.25 L588.15 727.16 L588.66 727.08 L589.16 726.99 L589.67 726.91 L590.18 726.84 L590.69 726.76 L591.19 726.7 L591.7 726.63 L592.21 726.57 L592.72 726.52 L593.22 726.47 L593.73 726.42 L594.24 726.38 L594.74 726.35 L595.25 726.32 L595.76 726.3 L596.27 726.28 L596.77 726.27 L597.28 726.27 L597.79 726.27 L598.29 726.27 L598.8 726.29 L599.31 726.3 L599.82 726.32 L600.32 726.35 L600.83 726.37 L601.34 726.41 L601.84 726.44 L602.35 726.48 L602.86 726.52 L603.37 726.56 L603.87 726.6 L604.38 726.65 L604.89 726.69 L605.4 726.74 L605.9 726.79 L606.41 726.84 L606.92 726.88 L607.42 726.93 L607.93 726.98 L608.44 727.03 L608.95 727.07 L609.45 727.12 L609.96 727.17 L610.47 727.21 L610.97 727.26 L611.48 727.31 L611.99 727.35 L612.5 727.4 L613 727.44 L613.51 727.48 L614.02 727.53 L614.53 727.57 L615.03 727.61 L615.54 727.66 L616.05 727.7 L616.55 727.74 L617.06 727.78 L617.57 727.82 L618.08 727.86 L618.58 727.9 L619.09 727.94 L619.6 727.97 L620.1 728.01 L620.61 728.05 L621.12 728.08 L621.63 728.12 L622.13 728.15 L622.64 728.19 L623.15 728.22 L623.66 728.25 L624.16 728.28 L624.67 728.31 L625.18 728.34 L625.68 728.37 L626.19 728.4 L626.7 728.42 L627.21 728.45 L627.71 728.48 L628.22 728.5 L628.73 728.53 L629.23 728.55 L629.74 728.57 L630.25 728.6 L630.76 728.62 L631.26 728.64 L631.77 728.66 L632.28 728.68 L632.79 728.7 L633.29 728.72 L633.8 728.74 L634.31 728.75 L634.81 728.77 L635.32 728.79 L635.83 728.8 L636.34 728.82 L636.84 728.84 L637.35 728.85 L637.86 728.87 L638.36 728.88 L638.87 728.89 L639.38 728.91 L639.89 728.92 L640.39 728.93 L640.9 728.94 L641.41 728.95 L641.92 728.96 L642.42 728.97 L642.93 728.98 L643.44 728.99 L643.94 729 L644.45 729.01 L644.96 729.02 L645.47 729.03 L645.97 729.04 L646.48 729.04 L646.99 729.05 L647.49 729.06 L648 729.07 L648.51 729.07 L649.02 729.08 L649.52 729.08 L650.03 729.09 L650.54 729.1 L651.05 729.1 L651.55 729.11 L652.06 729.11 L652.57 729.12 L653.07 729.12 L653.58 729.12 L654.09 729.13 L654.6 729.13 L655.1 729.14 L655.61 729.14 L656.12 729.14 L656.62 729.15 L657.13 729.15 L657.64 729.15 L658.15 729.16 L658.65 729.16 L659.16 729.16 L659.67 729.17 L660.18 729.17 L660.68 729.17 L661.19 729.17 L661.7 729.18 L662.2 729.18 L662.71 729.18 L663.22 729.18 L663.73 729.19 L664.23 729.19 L664.74 729.19 L665.25 729.19 L665.75 729.2 L666.26 729.2 L666.77 729.2 L667.28 729.2 L667.78 729.21 L668.29 729.21 L668.8 729.21 L669.31 729.22 L669.81 729.22 L670.32 729.22 L670.83 729.23 L671.33 729.23 L671.84 729.23 L672.35 729.24 L672.86 729.24 L673.36 729.25 L673.87 729.25 L674.38 729.25 L674.88 729.26 L675.39 729.26 L675.9 729.27 L676.41 729.27 L676.91 729.28 L677.42 729.28 L677.93 729.29 L678.44 729.3 L678.94 729.3 L679.45 729.31 L679.96 729.31 L680.46 729.32 L680.97 729.33 L681.48 729.33 L681.99 729.34 L682.49 729.35 L683 729.35 L683.51 729.36 L684.01 729.37 L684.52 729.38 L685.03 729.38 L685.54 729.39 L686.04 729.4 L686.55 729.41 L687.06 729.41 L687.57 729.42 L688.07 729.43 L688.58 729.44 L689.09 729.44 L689.59 729.45 L690.1 729.46 L690.61 729.47 L691.12 729.48 L691.62 729.49 L692.13 729.49 L692.64 729.5 L693.14 729.51 L693.65 729.52 L694.16 729.53 L694.67 729.54 L695.17 729.55 L695.68 729.56 L696.19 729.56 L696.7 729.57 L697.2 729.58 L697.71 729.59 L698.22 729.6 L698.72 729.61 L699.23 729.62 L699.74 729.63 L700.25 729.64 L700.75 729.65 L701.26 729.66 L701.77 729.66 L702.27 729.67 L702.78 729.68 L703.29 729.69 L703.8 729.7 L704.3 729.71 L704.81 729.72 L705.32 729.73 L705.82 729.74 L706.33 729.75 L706.84 729.76 L707.35 729.77 L707.85 729.78 L708.36 729.78 L708.87 729.79 L709.38 729.8 L709.88 729.81 L710.39 729.82 L710.9 729.83 L711.4 729.84 L711.91 729.85 L712.42 729.86 L712.93 729.87 L713.43 729.88 L713.94 729.89 L714.45 729.9 L714.95 729.91 L715.46 729.92 L715.97 729.93 L716.48 729.94 L716.98 729.94 L717.49 729.95 L718 729.96 L718.51 729.97 L719.01 729.98 L719.52 729.99 L720.03 730 L720.53 730.01 L721.04 730.02 L721.55 730.03 L722.06 730.04 L722.56 730.05 L723.07 730.06 L723.58 730.07 L724.08 730.08 L724.59 730.09 L725.1 730.09 L725.61 730.1 L726.11 730.11 L726.62 730.12 L727.13 730.13 L727.64 730.14 L728.14 730.15 L728.65 730.16 L729.16 730.17 L729.66 730.18 L730.17 730.19 L730.68 730.2 L731.19 730.21 L731.69 730.22 L732.2 730.22 L732.71 730.23 L733.21 730.24 L733.72 730.25 L734.23 730.26 L734.74 730.27 L735.24 730.28 L735.75 730.29 L736.26 730.3 L736.77 730.31 L737.27 730.32 L737.78 730.32 L738.29 730.33 L738.79 730.34 L739.3 730.35 L739.81 730.36 L740.32 730.37 L740.82 730.38 L741.33 730.39 L741.84 730.4 L742.34 730.4 L742.85 730.41 L743.36 730.42 L743.87 730.43 L744.37 730.44 L744.88 730.45 L745.39 730.46 L745.9 730.46 L746.4 730.47 L746.91 730.48 L747.42 730.49 L747.92 730.5 L748.43 730.51 L748.94 730.52 L749.45 730.52 L749.95 730.53 L750.46 730.54 L750.97 730.55 L751.47 730.56 L751.98 730.56 L752.49 730.57 L753 730.58 L753.5 730.59 L754.01 730.6 L754.52 730.61 L755.03 730.61 L755.53 730.62 L756.04 730.63 L756.55 730.64 L757.05 730.64 L757.56 730.65 L758.07 730.66 L758.58 730.67 L759.08 730.68 L759.59 730.68 L760.1 730.69 L760.6 730.7 L761.11 730.71 L761.62 730.71 L762.13 730.72 L762.63 730.73 L763.14 730.74 L763.65 730.74 L764.16 730.75 L764.66 730.76 L765.17 730.77 L765.68 730.77 L766.18 730.78 L766.69 730.79 L767.2 730.8 L767.71 730.8 L768.21 730.81 L768.72 730.82 L769.23 730.83 L769.73 730.83 L770.24 730.84 L770.75 730.85 L771.26 730.85 L771.76 730.86 L772.27 730.87 L772.78 730.88 L773.29 730.88 L773.79 730.89 L774.3 730.9 L774.81 730.9 L775.31 730.91 L775.82 730.92 L776.33 730.93 L776.84 730.93 L777.34 730.94 L777.85 730.95 L778.36 730.95 L778.86 730.96 L779.37 730.97 L779.88 730.97 L780.39 730.98 L780.89 730.99 L781.4 731 L781.91 731 L782.42 731.01 L782.92 731.02 L783.43 731.02 L783.94 731.03 L784.44 731.04 L784.95 731.04 L785.46 731.05 L785.97 731.06 L786.47 731.07 L786.98 731.07 L787.49 731.08 L787.99 731.09 L788.5 731.09 L789.01 731.1 L789.52 731.11 L790.02 731.11 L790.53 731.12 L791.04 731.13 L791.55 731.14 L792.05 731.14 L792.56 731.15 L793.07 731.16 L793.57 731.16 L794.08 731.17 L794.59 731.18 L795.1 731.18 L795.6 731.19 L796.11 731.2 L796.62 731.21 L797.12 731.21 L797.63 731.22 L798.14 731.23 L798.65 731.23 L799.15 731.24 L799.66 731.25 L800.17 731.26 L800.68 731.26 L801.18 731.27 L801.69 731.28 L802.2 731.28 L802.7 731.29 L803.21 731.3 L803.72 731.31 L804.23 731.31 L804.73 731.32 L805.24 731.33 L805.75 731.34 L806.25 731.34 L806.76 731.35 L807.27 731.36 L807.78 731.36 L808.28 731.37 L808.79 731.38 L809.3 731.39 L809.8 731.39 L810.31 731.4 L810.82 731.41 L811.33 731.42 L811.83 731.42 L812.34 731.43 L812.85 731.44 L813.36 731.45 L813.86 731.45 L814.37 731.46 L814.88 731.47 L815.38 731.48 L815.89 731.48 L816.4 731.49 L816.91 731.5 L817.41 731.51 L817.92 731.51 L818.43 731.52 L818.93 731.53 L819.44 731.54 L819.95 731.54 L820.46 731.55 L820.96 731.56 L821.47 731.57 L821.98 731.57 L822.49 731.58 L822.99 731.59 L823.5 731.6 L824.01 731.6 L824.51 731.61 L825.02 731.62 L825.53 731.63 L826.04 731.63 L826.54 731.64 L827.05 731.65 L827.56 731.66 L828.06 731.66 L828.57 731.67 L829.08 731.68 L829.59 731.69 L830.09 731.69 L830.6 731.7 L831.11 731.71 L831.62 731.72 L832.12 731.72 L832.63 731.73 L833.14 731.74 L833.64 731.75 L834.15 731.75 L834.66 731.76 L835.17 731.77 L835.67 731.77 L836.18 731.78 L836.69 731.79 L837.19 731.8 L837.7 731.8 L838.21 731.81 L838.72 731.82 L839.22 731.83 L839.73 731.83 L840.24 731.84 L840.75 731.85 L841.25 731.85 L841.76 731.86 L842.27 731.87 L842.77 731.88 L843.28 731.88 L843.79 731.89 L844.3 731.9 L844.8 731.9 L845.31 731.91 L845.82 731.92 L846.32 731.93 L846.83 731.93 L847.34 731.94 L847.85 731.95 L848.35 731.95 L848.86 731.96 L849.37 731.97 L849.88 731.97 L850.38 731.98 L850.89 731.99 L851.4 731.99 L851.9 732 L852.41 732.01 L852.92 732.01 L853.43 732.02 L853.93 732.03 L854.44 732.03 L854.95 732.04 L855.45 732.05 L855.96 732.05 L856.47 732.06 L856.98 732.07 L857.48 732.07 L857.99 732.08 L858.5 732.09 L859.01 732.09 L859.51 732.1 L860.02 732.11 L860.53 732.11 L861.03 732.12 L861.54 732.12 L862.05 732.13 L862.56 732.14 L863.06 732.14 L863.57 732.15 L864.08 732.15 L864.58 732.16 L865.09 732.17 L865.6 732.17 L866.11 732.18 L866.61 732.18 L867.12 732.19 L867.63 732.19 L868.14 732.2 L868.64 732.21 L869.15 732.21 L869.66 732.22 L870.16 732.22 L870.67 732.23 L871.18 732.23 L871.69 732.24 L872.19 732.24 L872.7 732.25 L873.21 732.25 L873.71 732.26 L874.22 732.26 L874.73 732.27 L875.24 732.27 L875.74 732.28 L876.25 732.28 L876.76 732.28 L877.27 732.29 L877.77 732.29 L878.28 732.3 L878.79 732.3 L879.29 732.31 L879.8 732.31 L880.31 732.31 L880.82 732.32 L881.32 732.32 L881.83 732.32 L882.34 732.33 L882.84 732.33 L883.35 732.34 L883.86 732.34 L884.37 732.34 L884.87 732.34 L885.38 732.35 L885.89 732.35 L886.4 732.35 L886.9 732.36 L887.41 732.36 L887.92 732.36 L888.42 732.36 L888.93 732.37 L889.44 732.37 L889.95 732.37 L890.45 732.37 L890.96 732.37 L891.47 732.38 L891.97 732.38 L892.48 732.38 L892.99 732.38 L893.5 732.38 L894 732.38 L894.51 732.39 L895.02 732.39 L895.53 732.39 L896.03 732.39 L896.54 732.39 L897.05 732.39 L897.55 732.39 L898.06 732.39 L898.57 732.39" stroke="#ff7f0e" stroke-width="2.08"/>
</g>
<rect x="493.5" y="534.5" width="404" height="302" fill="none" stroke="#000" stroke-width="1.11"/>
<path d="M493.5 836.5v5.1M544.5 836.5v5.1M596.5 836.5v5.1M647.5 836.5v5.1M699.5 836.5v5.1M750.5 836.5v5.1M801.5 836.5v5.1M853.5 836.5v5.1M493.5 807.5h-5.1M493.5 770.5h-5.1M493.5 733.5h-5.1M493.5 696.5h-5.1M493.5 659.5h-5.1M493.5 622.5h-5.1M493.5 585.5h-5.1M493.5 548.5h-5.1" stroke="#000" stroke-width="1.11"/>
<text x="492.7" y="857.3" font-size="13.89" text-anchor="middle">0</text>
<text x="544.13" y="857.3" font-size="13.89" text-anchor="middle">50</text>
<text x="595.56" y="857.3" font-size="13.89" text-anchor="middle">100</text>
<text x="646.99" y="857.3" font-size="13.89" text-anchor="middle">150</text>
<text x="698.42" y="857.3" font-size="13.89" text-anchor="middle">200</text>
<text x="749.85" y="857.3" font-size="13.89" text-anchor="middle">250</text>
<text x="801.28" y="857.3" font-size="13.89" text-anchor="middle">300</text>
<text x="852.71" y="857.3" font-size="13.89" text-anchor="middle">350</text>
<text x="482.9" y="811.6" font-size="13.89" text-anchor="end">&#8722;0.4</text>
<text x="482.9" y="774.6" font-size="13.89" text-anchor="end">&#8722;0.2</text>
<text x="482.9" y="737.6" font-size="13.89" text-anchor="end">0.0</text>
<text x="482.9" y="700.6" font-size="13.89" text-anchor="end">0.2</text>
<text x="482.9" y="663.6" font-size="13.89" text-anchor="end">0.4</text>
<text x="482.9" y="626.6" font-size="13.89" text-anchor="end">0.6</text>
<text x="482.9" y="589.6" font-size="13.89" text-anchor="end">0.8</text>
<text x="482.9" y="552.6" font-size="13.89" text-anchor="end">1.0</text>
<text x="695.2" y="526.1" font-size="16.67" text-anchor="middle" letter-spacing="0.07">Real Space Correlations</text>
<text x="694.6" y="880.4" font-size="13.89" text-anchor="middle">Z [<tspan font-style="italic">&#197;</tspan>]</text>
<text transform="translate(441.1 686.7) rotate(-90)" font-size="13.89" text-anchor="middle">Correlation</text>
<rect x="738.3" y="541.6" width="152.2" height="45.6" rx="2.8" fill="#fff" fill-opacity="0.8" stroke="#ccc" stroke-opacity="0.8" stroke-width="1.11"/>
<path d="M743.1 552.8h29.9" stroke="#1f77b4" stroke-width="2.08"/>
<path d="M743.1 573.7h29.9" stroke="#ff7f0e" stroke-width="2.08"/>
<text x="782.8" y="557.7" font-size="13.89" letter-spacing="0.1">1D Correlation</text>
<text x="782.8" y="578.5" font-size="13.89" letter-spacing="0.1">3D Correlation</text>
</svg>

<div style="left:548px;top:450px;width:1px;height:38px;background:#c9c9c9"></div>
<div style="left:738px;top:450px;width:1px;height:38px;background:#c9c9c9"></div>
<svg style="left:416px;top:440px" width="499" height="58" viewBox="416 440 499 58" fill="#000">
<path d="M431.9 462.5 L421.4 471.1 L422.6 472.5 L431.9 465.0 L441.2 472.5 L442.4 471.1 L439.3 468.5 L439.3 463.5 L437.1 463.5 L437.1 466.7 Z"/>
<path d="M431.9 466.4 L424.7 472.3 L424.7 479.3 L430.1 479.3 L430.1 474.4 L433.7 474.4 L433.7 479.3 L439.1 479.3 L439.1 472.3 Z"/>
<path d="M482.7 469.7H470M476.5 462.3L469.1 469.7L476.5 477.1" fill="none" stroke="#000" stroke-width="4.3" stroke-linecap="round" stroke-linejoin="miter"/>
<path d="M510.4 469.7H523.1M516.6 462.3L524 469.7L516.6 477.1" fill="none" stroke="#000" stroke-width="4.3" stroke-linecap="round" stroke-linejoin="miter"/>
<path d="M570.5 469.5H587.5M579 461V478" fill="none" stroke="#000" stroke-width="3.2"/>
<path d="M579 457.5L583.5 462.6H574.5ZM579 481.5L583.5 476.4H574.5ZM567 469.5L572.1 465V474ZM591 469.5L585.9 465V474Z" stroke="#000" stroke-width=".3" stroke-linejoin="round"/>
<circle cx="620.0" cy="467.7" r="7.15" fill="none" stroke="#000" stroke-width="3.2"/>
<path d="M625.6 473.3L630.6 478.2" fill="none" stroke="#000" stroke-width="3.6" stroke-linecap="round"/>
<path d="M655 463.8H675M655 470.3H675M655 476.8H675" fill="none" stroke="#000" stroke-width="1.7"/>
<rect x="658.4" y="461.2" width="5.1" height="5.2" rx=".8"/><rect x="666.7" y="467.7" width="5.1" height="5.2" rx=".8"/><rect x="660" y="474.2" width="5.1" height="5.2" rx=".8"/>
<path d="M696.5 459.7V478.6H719.9" fill="none" stroke="#000" stroke-width="1.6"/>
<path d="M700.3 475.0L705.6 469.2L709.0 472.4L716.2 464.4" fill="none" stroke="#000" stroke-width="3.1" stroke-linejoin="miter"/>
<path d="M711.6 461.2H719.4V469.0Z"/>
<path d="M760.3 461H774.2L777.8 464.6V478.2H760.3Z" fill="none" stroke="#000" stroke-width="2" stroke-linejoin="round"/>
<path d="M762.9 460.4H772.3V467.1H762.9ZM767 461.7V465.4H770.6V461.7Z" fill-rule="evenodd"/>
<path d="M762.6 471.9H776.1V478.6H762.6ZM764.4 473.4V477.5H774.4V473.4Z" fill-rule="evenodd"/>
</svg>
<svg style="left:903.6px;top:459px" width="10" height="7" viewBox="0 0 10 7"><path d="M0.9 1.1L3.5 3.45L0.9 5.8M4.9 1.1L7.5 3.45L4.9 5.8" fill="none" stroke="#404040" stroke-width="1.45"/></svg>
</body></html>
